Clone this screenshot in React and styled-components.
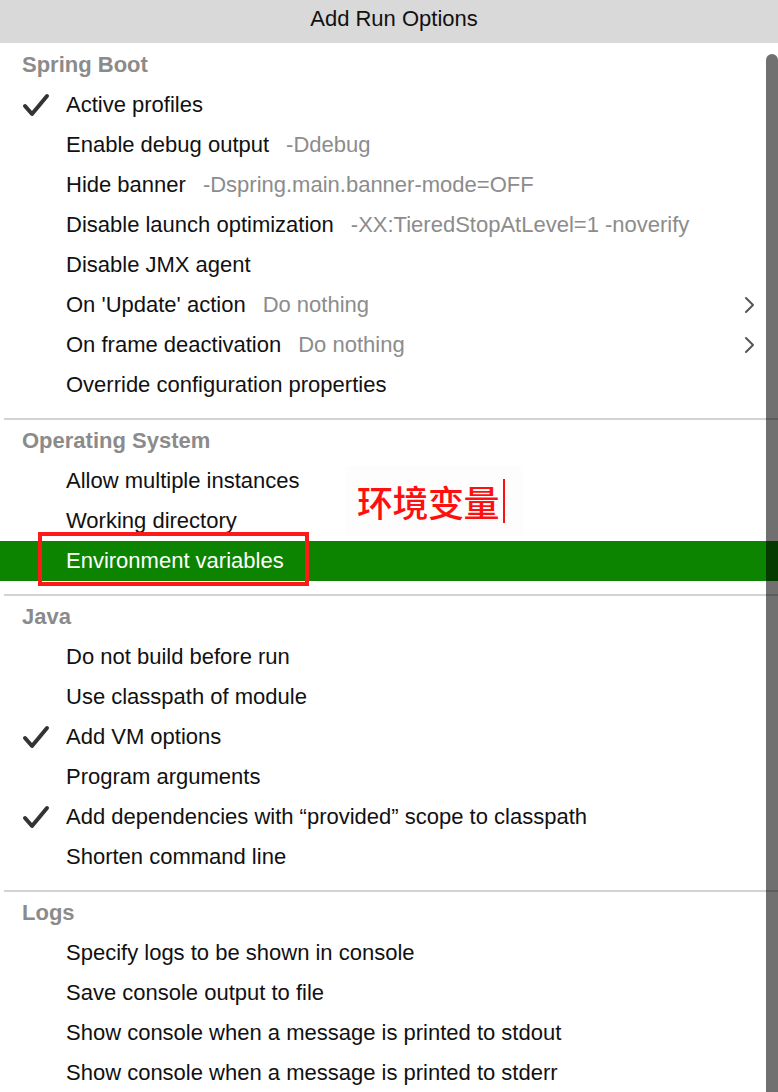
import React from 'react';
import styled, {createGlobalStyle} from 'styled-components';

const GlobalStyle = createGlobalStyle`
    html, body {
        margin: 0;
        padding: 0;
        background: #ffffff;
    }
    body {
        font-family: "Liberation Sans", Arial, sans-serif;
    }
`;

const sections = [
    {
        title: 'Spring Boot',
        items: [
            {label: 'Active profiles', checked: true},
            {label: 'Enable debug output', hint: '-Ddebug'},
            {label: 'Hide banner', hint: '-Dspring.main.banner-mode=OFF'},
            {label: 'Disable launch optimization', hint: '-XX:TieredStopAtLevel=1 -noverify'},
            {label: 'Disable JMX agent'},
            {label: "On 'Update' action", hint: 'Do nothing', submenu: true},
            {label: 'On frame deactivation', hint: 'Do nothing', submenu: true},
            {label: 'Override configuration properties'},
        ],
    },
    {
        title: 'Operating System',
        items: [
            {label: 'Allow multiple instances'},
            {label: 'Working directory'},
            {label: 'Environment variables', selected: true},
        ],
    },
    {
        title: 'Java',
        items: [
            {label: 'Do not build before run'},
            {label: 'Use classpath of module'},
            {label: 'Add VM options', checked: true},
            {label: 'Program arguments'},
            {label: 'Add dependencies with \u201cprovided\u201d scope to classpath', checked: true},
            {label: 'Shorten command line'},
        ],
    },
    {
        title: 'Logs',
        items: [
            {label: 'Specify logs to be shown in console'},
            {label: 'Save console output to file'},
            {label: 'Show console when a message is printed to stdout'},
            {label: 'Show console when a message is printed to stderr'},
        ],
    },
];

const CheckIcon = () => (
    <svg width="30" height="24" viewBox="0 0 30 24">
        <polyline points="4,13 11,21 26,3" fill="none" stroke="#333" strokeWidth="4" strokeLinecap="round" strokeLinejoin="round"/>
    </svg>
);

const ChevronIcon = () => (
    <svg width="12" height="18" viewBox="0 0 12 18">
        <polyline points="2,2 9,9 2,16" fill="none" stroke="#555" strokeWidth="2" strokeLinecap="round" strokeLinejoin="round"/>
    </svg>
);

export default function App() {
    return (
        <Popup>
            <GlobalStyle/>
            <TitleBar>Add Run Options</TitleBar>
            <List>
                {sections.map((section, i) => (
                    <Section key={section.title}>
                        {i > 0 && <Divider/>}
                        <SectionTitle>{section.title}</SectionTitle>
                        {section.items.map(item => (
                            <Row key={item.label} $selected={item.selected}>
                                <CheckSlot>{item.checked && <CheckIcon/>}</CheckSlot>
                                <Label>{item.label}</Label>
                                {item.hint && <Hint>{item.hint}</Hint>}
                                {item.submenu && <Arrow><ChevronIcon/></Arrow>}
                                {item.selected && <Highlight/>}
                            </Row>
                        ))}
                    </Section>
                ))}
            </List>
            <Annotation>
                <AnnotationText>环境变量</AnnotationText>
                <Caret/>
            </Annotation>
            <ScrollThumb/>
        </Popup>
    );
}

const Popup = styled.div`
    position: relative;
    width: 778px;
    height: 1092px;
    overflow: hidden;
    background: #ffffff;
`;

const TitleBar = styled.div`
    height: 43px;
    box-sizing: border-box;
    padding: 0 0 6px 10px;
    background: #d9d9d9;
    color: #111;
    font-size: 22px;
    display: flex;
    align-items: center;
    justify-content: center;
`;

const List = styled.div`
    padding-top: 2px;
`;

const Section = styled.div`
    display: flex;
    flex-direction: column;
`;

const Divider = styled.div`
    height: 2px;
    background: #d3d3d3;
    margin: 13px 0 1px 4px;
`;

const SectionTitle = styled.div`
    height: 40px;
    display: flex;
    align-items: center;
    padding-left: 22px;
    font-size: 22px;
    font-weight: bold;
    color: #8b8b8b;
`;

const Row = styled.div`
    position: relative;
    height: 40px;
    display: flex;
    align-items: center;
    font-size: 22px;
    color: ${p => p.$selected ? '#ffffff' : '#111111'};
    background: ${p => p.$selected ? '#0d8400' : 'transparent'};
`;

const CheckSlot = styled.div`
    width: 66px;
    padding-left: 21px;
    box-sizing: border-box;
    display: flex;
    align-items: center;
`;

const Label = styled.span`
    white-space: nowrap;
`;

const Hint = styled.span`
    margin-left: 17px;
    color: #8c8c8c;
    white-space: nowrap;
`;

const Arrow = styled.span`
    margin-left: auto;
    padding-right: 22px;
    display: flex;
    align-items: center;
`;

const Highlight = styled.div`
    position: absolute;
    left: 38px;
    top: -9px;
    width: 263px;
    height: 46px;
    border: 4px solid #ff1a1a;
`;

const Annotation = styled.div`
    position: absolute;
    left: 345px;
    top: 466px;
    width: 178px;
    height: 70px;
    background: #fdfdfd;
    display: flex;
    align-items: center;
    padding-left: 12px;
    box-sizing: border-box;
`;

const AnnotationText = styled.span`
    font-family: "Noto Sans CJK SC", sans-serif;
    font-size: 36px;
    font-weight: 500;
    color: #ff1010;
    letter-spacing: -0.5px;
    line-height: 1;
`;

const Caret = styled.span`
    width: 2px;
    height: 44px;
    background: #ff1010;
    margin-left: 4px;
`;

const ScrollThumb = styled.div`
    position: absolute;
    right: 0;
    top: 54px;
    bottom: 0;
    width: 12px;
    background: rgba(0, 0, 0, 0.56);
    border-radius: 6px 6px 0 0;
`;
